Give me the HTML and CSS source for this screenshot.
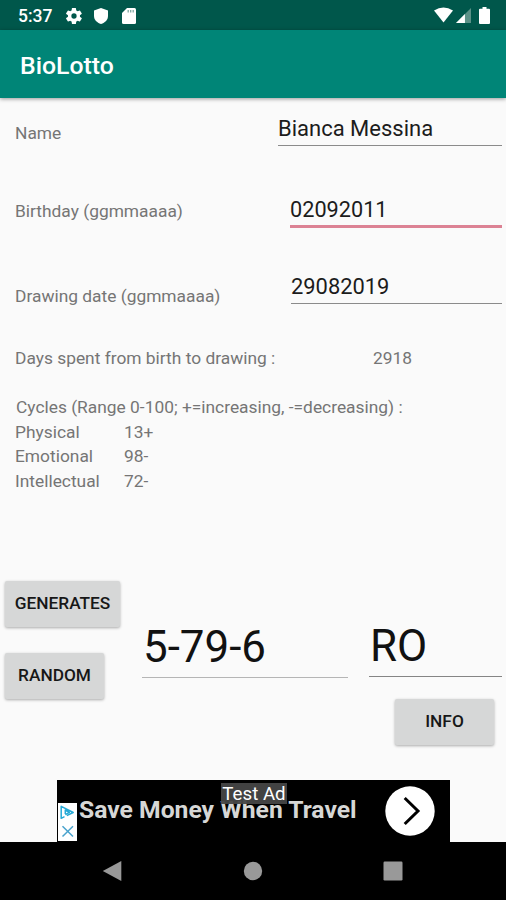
FILE: index.html
```html
<!DOCTYPE html>
<html lang="en">
<head>
<meta charset="utf-8">
<title>BioLotto</title>
<link rel="stylesheet" href="styles.css">
</head>
<body>
<div class="screen">
  <header class="status">
    <span class="clock">5:37</span>
    <svg class="gear" viewBox="2 2 20 20"><path fill="#fff" fill-rule="evenodd" d="M19.4 13a7.500 7.500 0 0 0 0-2l2.100-1.600a.5.5 0 0 0 .1-.7l-2-3.400a.5.5 0 0 0-.6-.2l-2.500 1a7.300 7.300 0 0 0-1.700-1l-.4-2.700a.5.5 0 0 0-.5-.4h-4a.5.5 0 0 0-.5.4L9 5.100a7.700 7.700 0 0 0-1.700 1l-2.500-1a.5.5 0 0 0-.6.2l-2 3.400a.5.5 0 0 0 .1.700L4.500 11a8 8 0 0 0 0 2l-2.200 1.600a.5.5 0 0 0-.1.700l2 3.400c.1.200.4.300.6.200l2.500-1a7.300 7.300 0 0 0 1.700 1l.4 2.700c0 .2.200.4.500.4h4c.3 0 .5-.2.500-.4l.4-2.700a7.700 7.700 0 0 0 1.700-1l2.500 1c.2.100.5 0 .6-.2l2-3.400a.5.5 0 0 0-.1-.7zM12 15.300a3.300 3.300 0 1 1 0-6.600 3.300 3.300 0 0 1 0 6.600z"/></svg>
    <svg class="shield" viewBox="0 0 14 16"><path fill="#fff" d="M7 0 14 2.600V8c0 3.700-2.800 6.700-7 8-4.200-1.300-7-4.300-7-8V2.600z"/></svg>
    <svg class="card" viewBox="0 0 14 16"><path fill="#fff" d="M5 0h7.500Q14 0 14 1.500v13q0 1.500-1.500 1.500h-11Q0 16 0 14.500V5z"/><path stroke="#7fa8a2" stroke-width="1.300" d="M6.200 2v2.600M8.700 2v2.600M11.200 2v2.600"/></svg>
    <svg class="wifi" viewBox="0 0 20 16"><path fill="#fff" d="M0 3.300Q10-3.300 20 3.300L10 16z"/></svg>
    <svg class="signal" viewBox="0 0 16 16"><path fill="#5b9187" d="M16 0v16H0z"/><path fill="#fff" d="M9.500 6.500V16H0z"/></svg>
    <svg class="battery" viewBox="0 0 11 17"><path fill="#fff" d="M3.500 0h4v1.700H10q1 0 1 1V16q0 1-1 1H1q-1 0-1-1V2.700q0-1 1-1h2.500z"/></svg>
  </header>
  <div class="appbar">BioLotto</div>
  <main class="content">
    <div class="row row-name">
      <span class="label">Name</span>
      <div class="field field-name">Bianca Messina</div>
    </div>
    <div class="row row-birth">
      <span class="label">Birthday (ggmmaaaa)</span>
      <div class="field field-birth focused">02092011</div>
    </div>
    <div class="row row-draw">
      <span class="label">Drawing date (ggmmaaaa)</span>
      <div class="field field-draw">29082019</div>
    </div>
    <div class="days"><span>Days spent from birth to drawing :</span><span>2918</span></div>
    <section class="cycles">
      <div class="cycles-title">Cycles (Range 0-100; +=increasing, -=decreasing) :</div>
      <div class="cycle"><span>Physical</span><span>13+</span></div>
      <div class="cycle"><span>Emotional</span><span>98-</span></div>
      <div class="cycle"><span>Intellectual</span><span>72-</span></div>
    </section>
    <section class="results">
      <div class="actions">
        <div class="button generate">GENERATES</div>
        <div class="button">RANDOM</div>
      </div>
      <div class="result numbers">5-79-6</div>
      <div class="side">
        <div class="result wheel">RO</div>
        <div class="button info">INFO</div>
      </div>
    </section>
    <div class="ad">
      <svg class="adchoices" viewBox="0 0 19 38"><path fill="#fff" d="M0 0h19v38H0z"/><g fill="none" stroke="#26a9d6" stroke-width="1.500"><path stroke-linejoin="round" d="M6.500 13.700 3.200 15.300V3.300L15.200 9.500 8.800 12.600M7.300 11V7l4.100 2.400-4.100 2.200"/><path stroke="#4aa3cd" d="m4.500 23.200 10.500 10.300M15 23.200 4.500 33.500"/></g></svg>
      <span class="headline">Save Money When Travel</span>
      <span class="test">Test Ad</span>
      <svg class="go" viewBox="0 0 50 50"><circle cx="25" cy="25" r="24.700" fill="#fff"/><path fill="none" stroke="#000" stroke-width="3" d="m19.700 12 13.300 13-13.300 13"/></svg>
    </div>
  </main>
  <nav class="navbar">
    <svg viewBox="0 0 20 20"><path fill="#999" d="M19.300 0v20L.8 10z"/></svg>
    <svg viewBox="0 0 20 20"><circle cx="10" cy="10" r="9.200" fill="#999"/></svg>
    <svg viewBox="0 0 20 20"><rect x=".5" y=".5" width="19" height="19" rx="1.200" fill="#999"/></svg>
  </nav>
</div>
</body>
</html>
```
FILE: styles.css
```css
* { box-sizing: border-box; }
body { margin: 0; background: #fafafa; font-family: Roboto, sans-serif; }
svg { display: block; flex: none; }
.screen { width: 506px; height: 900px; display: flex; flex-direction: column; overflow: hidden; white-space: nowrap; }

.status { height: 30px; flex: none; background: #00574b; display: flex; align-items: center; padding: 1px 16px 0 18px; color: #fff; }
.clock { width: 48px; font-size: 17.500px; font-weight: 500; line-height: 20px; padding-top: 1px; }
.gear { width: 16px; height: 16px; }
.shield { width: 14px; height: 16px; margin-left: 12px; }
.card { width: 14px; height: 16px; margin-left: 14px; }
.wifi { width: 19px; height: 16px; margin-left: auto; margin-top: -2px; }
.signal { width: 15px; height: 15px; margin-left: 3px; }
.battery { width: 11px; height: 17px; margin-left: 8px; }

.appbar { height: 68px; flex: none; background: #008577; color: #fff; padding: 2px 20px 0; font-size: 24.800px; font-weight: 500; line-height: 68px; box-shadow: 0 1px 4px rgba(0, 0, 0, .4); }

.content { height: 744px; flex: none; display: flex; flex-direction: column; color: #757575; font-size: 17.360px; line-height: 20px; }
.row { flex: none; display: flex; justify-content: space-between; align-items: flex-start; padding: 0 4px 0 15px; }
.row-name { height: 82px; padding-top: 17px; }
.row-name .label { margin-top: 8px; }
.row-birth { height: 80px; padding-top: 16px; }
.row-birth .label { margin-top: 5px; }
.row-draw { height: 88px; padding-top: 14px; }
.row-draw .label { margin-top: 12px; }
.field { color: #1c1c1c; font-size: 22px; line-height: 28px; border-bottom: 1px solid #8b8b8b; }
.field-name { width: 224px; height: 31px; }
.field-birth { width: 212px; height: 32px; font-size: 21.700px; }
.field-draw { width: 211px; height: 30px; font-size: 21.900px; line-height: 25px; }
.focused { border-bottom: 3px solid #dc8294; }

.days { height: 49px; flex: none; display: grid; grid-template-columns: 358px 1fr; padding-left: 15px; }
.cycles { height: 183px; flex: none; padding-left: 15px; }
.cycles-title { padding-left: 1px; height: 25px; }
.cycle { display: grid; grid-template-columns: 109px 1fr; height: 24.400px; }

.results { height: 200px; flex: none; display: flex; padding: 0 4px 0 5px; }
.actions { width: 137px; padding-top: 1px; }
.button { width: 99px; height: 46px; border-radius: 2px; background: #d6d7d7; box-shadow: 0 1px 3px rgba(0, 0, 0, .32); color: #171717; font-size: 17.300px; font-weight: 500; line-height: 45px; text-align: center; }
.generate { width: 115px; margin-bottom: 26px; line-height: 44px; }
.numbers { width: 206px; height: 58px; margin-top: 40px; }
.result { color: #111; font-size: 43.900px; line-height: 54px; padding-left: 1px; border-bottom: 1px solid #b5b5b5; }
.side { width: 133px; margin-left: 21px; padding-top: 39px; }
.wheel { height: 58px; line-height: 54px; border-bottom-color: #858585; }
.info { margin: 22px 0 0 26px; line-height: 44px; }

.ad { position: relative; width: 393px; height: 62px; margin-left: 57px; flex: none; background: #000; display: flex; }
.adchoices { width: 19px; height: 38px; margin: 23px 0 0 1px; }
.headline { margin: 15px 0 0 2px; color: #d6d7d6; font-size: 24.700px; font-weight: 700; line-height: 30px; }
.test { position: absolute; left: 164px; top: 3px; width: 66px; height: 21px; background: rgba(70, 70, 70, .95); color: #fff; font-size: 18.700px; line-height: 22px; text-align: center; }
.go { width: 50px; height: 50px; margin: 6px 15px 0 auto; }

.navbar { height: 58px; flex: none; background: #000; display: flex; justify-content: space-between; align-items: center; padding: 0 103px 0 102px; }
.navbar svg { width: 20px; height: 20px; }
```
